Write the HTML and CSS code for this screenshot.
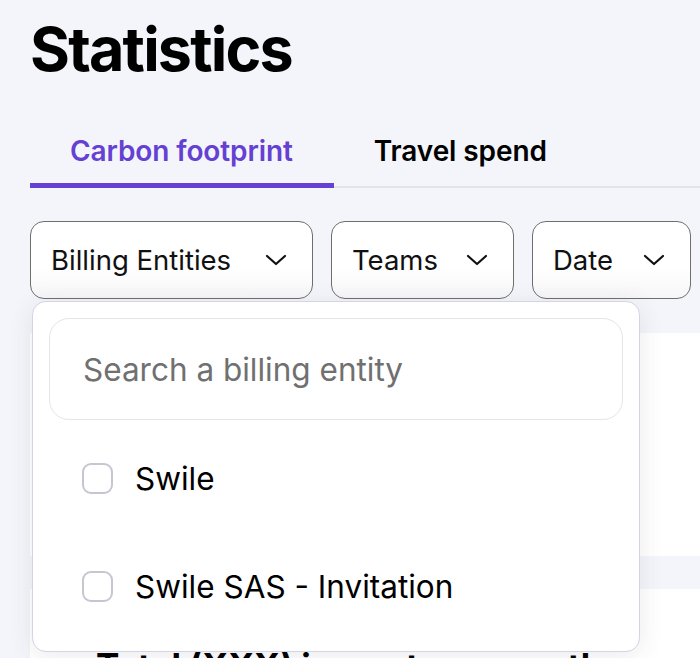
FILE: index.html
```html
<!DOCTYPE html>
<html lang="en">
<head>
<meta charset="utf-8">
<title>Statistics</title>
<link rel="stylesheet" href="styles.css">
</head>
<body>
<div class="page">
  <h1 class="title">Statistics</h1>
  <nav class="tabs">
    <div class="tab tab-active">Carbon footprint</div>
    <div class="tab">Travel spend</div>
  </nav>
  <div class="filters">
    <button class="filter filter-billing">Billing Entities
      <svg class="chev" viewBox="0 0 24 24" width="24" height="24"><path d="M3 8l9 8 9-8" fill="none" stroke="#111" stroke-width="2.2" stroke-linecap="round" stroke-linejoin="round"/></svg>
    </button>
    <button class="filter filter-teams">Teams
      <svg class="chev" viewBox="0 0 24 24" width="24" height="24"><path d="M3 8l9 8 9-8" fill="none" stroke="#111" stroke-width="2.2" stroke-linecap="round" stroke-linejoin="round"/></svg>
    </button>
    <button class="filter filter-date">Date
      <svg class="chev" viewBox="0 0 24 24" width="24" height="24"><path d="M3 8l9 8 9-8" fill="none" stroke="#111" stroke-width="2.2" stroke-linecap="round" stroke-linejoin="round"/></svg>
    </button>
    <div class="dropdown">
      <div class="search">Search a billing entity</div>
      <div class="options">
        <label class="option"><span class="box"></span>Swile</label>
        <label class="option"><span class="box"></span>Swile SAS - Invitation</label>
      </div>
    </div>
  </div>
  <section class="card card-top"></section>
  <section class="card card-bottom">
    <h2 class="card-title">Total (XXX) impact per month</h2>
  </section>
</div>
</body>
</html>
```
FILE: styles.css
```css
* { box-sizing: border-box; }
html, body { margin: 0; padding: 0; }
body {
  background: #f4f5fa;
  font-family: Inter, "Noto Sans", sans-serif;
  color: #000;
}
.page {
  width: 700px;
  height: 658px;
  overflow: hidden;
  padding-left: 30px;
}
.title {
  margin: 0;
  padding-top: 12px;
  font-size: 61px;
  line-height: 74px;
  font-weight: 700;
  letter-spacing: -1.8px;
}
.tabs {
  display: flex;
  margin-top: 49px;
  border-bottom: 2px solid #e3e4ea;
  width: 700px;
}
.tab {
  font-size: 28px;
  line-height: 32px;
  font-weight: 600;
  padding: 0 41px 16px 40px;
  margin-bottom: -2px;
  border-bottom: 5px solid transparent;
  letter-spacing: -0.1px;
}
.tab-active {
  color: #6441d2;
  border-bottom-color: #6441d2;
}
.filters {
  position: relative;
  display: flex;
  gap: 18px;
  margin-top: 33px;
}
.filter {
  display: flex;
  align-items: center;
  justify-content: space-between;
  height: 78px;
  padding: 0 24px 0 20px;
  background: linear-gradient(#ffffff 60%, #f6f6f8);
  border: 1.5px solid #6e6e6e;
  border-radius: 14px;
  font-family: Inter, "Noto Sans", sans-serif;
  font-size: 27.5px;
  color: #111;
}
.filter-billing { width: 283px; }
.filter-teams { width: 183px; }
.filter-date { width: 159px; }
.chev { flex: none; }
.dropdown {
  position: absolute;
  top: 80px;
  left: 2px;
  width: 608px;
  height: 351px;
  background: #fff;
  border: 1px solid #d3d5e6;
  border-radius: 14px;
  box-shadow: 0 4px 24px rgba(60, 60, 90, 0.10);
  padding: 16px 16px 0 16px;
  z-index: 2;
}
.search {
  height: 102px;
  border: 1.5px solid #e5e5e8;
  border-radius: 20px;
  display: flex;
  align-items: center;
  padding-left: 33px;
  font-size: 31.5px;
  color: #707070;
}
.options {
  display: flex;
  flex-direction: column;
  gap: 76px;
  padding: 42px 0 0 33px;
}
.option {
  display: flex;
  align-items: center;
  gap: 22px;
  height: 32px;
  font-size: 31.5px;
  color: #000;
}
.box {
  width: 31px;
  height: 31px;
  border: 2px solid #c6c6d2;
  border-radius: 9px;
  flex: none;
}
.card {
  background: #fff;
  width: 700px;
}
.card-top {
  margin-top: 34px;
  height: 223px;
}
.card-bottom {
  margin-top: 33px;
  height: 200px;
  padding: 56px 0 0 66px;
}
.card-title {
  margin: 0;
  font-size: 35px;
  font-weight: 700;
}
```
